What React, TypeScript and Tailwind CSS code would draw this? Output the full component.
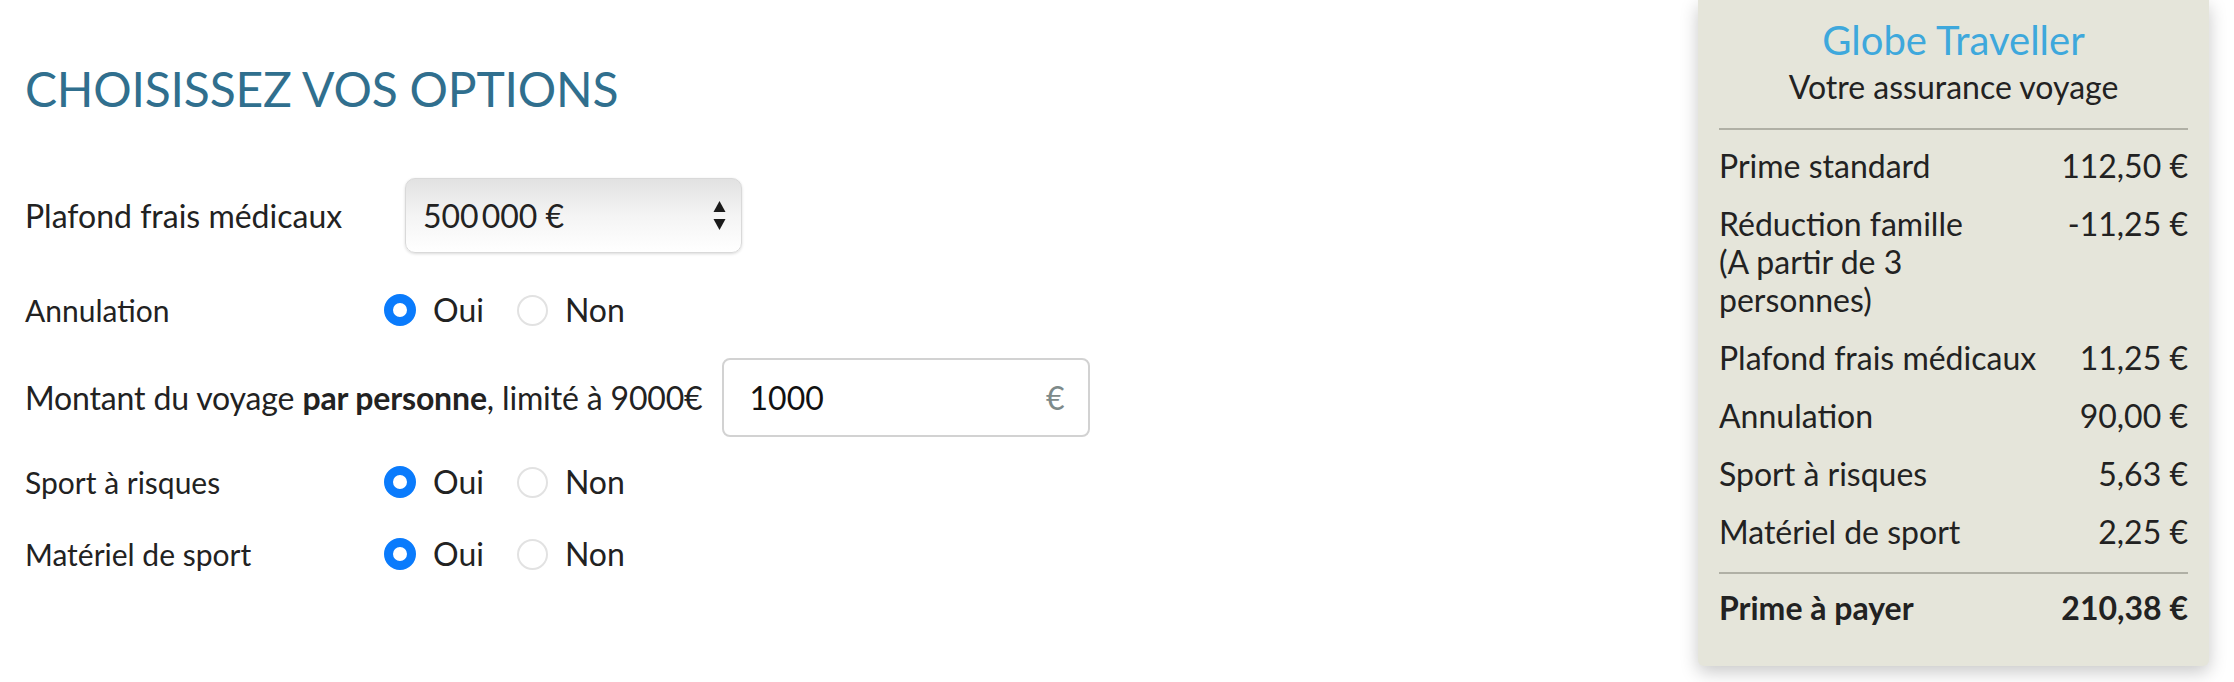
import React from "react"

const font = { fontFamily: "Lato, 'Noto Sans', sans-serif" }

function Radio({ checked }: { checked: boolean }) {
  return checked ? (
    <span className="box-border block h-[32px] w-[32px] rounded-full border-[9px] border-[#0a7bfc] bg-white" />
  ) : (
    <span className="box-border block h-[31px] w-[31px] rounded-full border-2 border-[#e2e2e2] bg-white" />
  )
}

function YesNo() {
  return (
    <div className="flex items-center">
      <Radio checked />
      <span className="ml-[17px] mr-[33px]">Oui</span>
      <Radio checked={false} />
      <span className="ml-[17px]">Non</span>
    </div>
  )
}

const lines = [
  { label: "Prime standard", value: "112,50\u00a0€" },
  { label: "Réduction famille\n(A partir de 3\npersonnes)", value: "-11,25\u00a0€" },
  { label: "Plafond frais médicaux", value: "11,25\u00a0€" },
  { label: "Annulation", value: "90,00\u00a0€" },
  { label: "Sport à risques", value: "5,63\u00a0€" },
  { label: "Matériel de sport", value: "2,25\u00a0€" },
]

export default function App() {
  return (
    <div className="flex min-h-[682px] w-[2234px] bg-white text-[32px] text-[#222]" style={font}>
      {/* Options form */}
      <div className="flex-1 pl-[25px]">
        <h2 className="mt-[65px] text-[48px] leading-[48px] font-normal tracking-[-0.2px] text-[#306f8e]">CHOISISSEZ VOS OPTIONS</h2>

        <div className="mt-[65px] flex h-[75px] items-center">
          <span className="w-[359px]">Plafond frais médicaux</span>
          <div className="ml-[21px] flex h-[75px] w-[337px] items-center justify-between rounded-[10px] border border-[#d9d9d9] bg-gradient-to-b from-[#e2e2e2] via-[#f4f4f4] to-[#ffffff] pl-[17px] pr-[15px] shadow-[0_1px_3px_rgba(0,0,0,0.15)]">
            <span>
              500<span className="ml-[3px]">000</span>{"\u00a0"}€
            </span>
            <svg width="13" height="32" viewBox="0 0 13 32">
              <path d="M6.5 1 L12.5 12 L0.5 12 Z" fill="#1a1a1a" />
              <path d="M0.5 19 L12.5 19 L6.5 30 Z" fill="#1a1a1a" />
            </svg>
          </div>
        </div>

        <div className="mt-[30px] flex h-[54px] items-center">
          <span className="w-[359px] text-[30px]">Annulation</span>
          <YesNo />
        </div>

        <div className="mt-[21px] flex h-[79px] items-center">
          <span className="tracking-[-0.15px]">
            Montant du voyage <b className="font-bold">par personne</b>, limité à 9000€
          </span>
          <div className="ml-[19px] box-border flex h-[79px] w-[368px] items-center justify-between rounded-[8px] border-2 border-[#d2d2d2] pl-[26px] pr-[23px]">
            <span className="text-[#111]">1000</span>
            <span className="text-[#7d8a8a]">€</span>
          </div>
        </div>

        <div className="mt-[18px] flex h-[54px] items-center">
          <span className="w-[359px] text-[30px]">Sport à risques</span>
          <YesNo />
        </div>

        <div className="mt-[18px] flex h-[54px] items-center">
          <span className="w-[359px] text-[30px]">Matériel de sport</span>
          <YesNo />
        </div>
      </div>

      {/* Summary panel */}
      <div className="mr-[25px] h-[666px] w-[511px] rounded-b-[6px] bg-[#e5e5da] px-[21px] shadow-[0_6px_18px_rgba(0,0,0,0.22)]">
        <div className="pt-[16px] text-center text-[40px] leading-[48px] text-[#3ea8dc]">Globe Traveller</div>
        <div className="mt-[4px] text-center leading-[38px]">Votre assurance voyage</div>
        <div className="mt-[22px] h-[2px] bg-[#b0b0a5]" />

        <div className="mt-[7px]">
          {lines.map((l) => (
            <div key={l.label} className="flex justify-between py-[10px] leading-[38px]">
              <span className="whitespace-pre-line">{l.label}</span>
              <span className="whitespace-nowrap">{l.value}</span>
            </div>
          ))}
        </div>

        <div className="mt-[11px] h-[2px] bg-[#b0b0a5]" />
        <div className="flex justify-between pt-[15px] leading-[38px] font-bold">
          <span>Prime à payer</span>
          <span>210,38{"\u00a0"}€</span>
        </div>
      </div>
    </div>
  )
}
